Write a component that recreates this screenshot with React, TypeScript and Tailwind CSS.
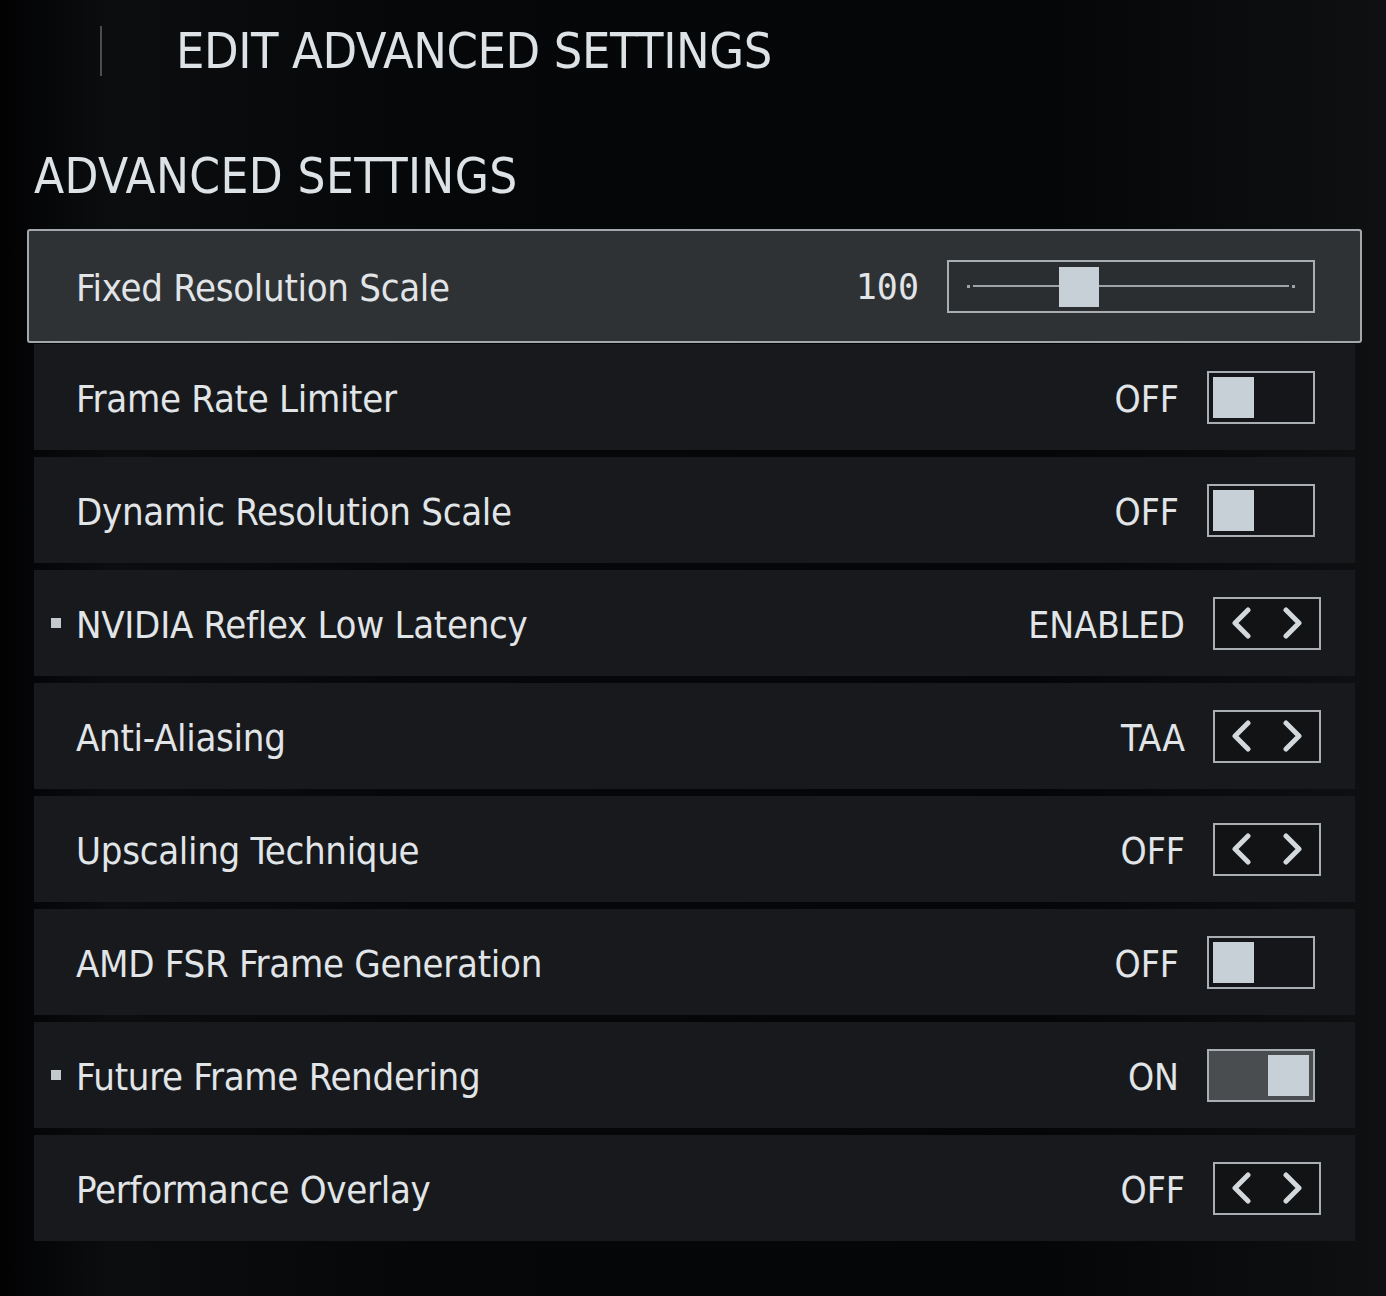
import React from 'react';

type Control =
  | { kind: 'slider'; value: string; pos: number }
  | { kind: 'toggle'; value: string; on: boolean }
  | { kind: 'arrows'; value: string };

type Setting = {
  label: string;
  bullet?: boolean;
  control: Control;
};

const settings: Setting[] = [
  { label: 'Fixed Resolution Scale', control: { kind: 'slider', value: '100', pos: 92 } },
  { label: 'Frame Rate Limiter', control: { kind: 'toggle', value: 'OFF', on: false } },
  { label: 'Dynamic Resolution Scale', control: { kind: 'toggle', value: 'OFF', on: false } },
  { label: 'NVIDIA Reflex Low Latency', bullet: true, control: { kind: 'arrows', value: 'ENABLED' } },
  { label: 'Anti-Aliasing', control: { kind: 'arrows', value: 'TAA' } },
  { label: 'Upscaling Technique', control: { kind: 'arrows', value: 'OFF' } },
  { label: 'AMD FSR Frame Generation', control: { kind: 'toggle', value: 'OFF', on: false } },
  { label: 'Future Frame Rendering', bullet: true, control: { kind: 'toggle', value: 'ON', on: true } },
  { label: 'Performance Overlay', control: { kind: 'arrows', value: 'OFF' } },
];

const Toggle = ({ on }: { on: boolean }) => (
  <div
    className={`flex w-[108px] h-[53px] p-[4px] border-2 border-[#a9aeb2] ${
      on ? 'bg-[#4a4d50] justify-end' : 'bg-[#141619] justify-start'
    }`}
  >
    <div className="w-[41px] h-full bg-[#c6d0d6]" />
  </div>
);

const Arrows = () => (
  <div className="flex items-center justify-center gap-[30px] w-[108px] h-[53px] border-2 border-[#a9aeb2] bg-[#111315]">
    <svg width="22" height="32" viewBox="0 0 22 32" fill="none">
      <polyline points="18,3 5,16 18,29" stroke="#d2d8dc" strokeWidth="5" strokeLinecap="round" strokeLinejoin="round" />
    </svg>
    <svg width="22" height="32" viewBox="0 0 22 32" fill="none">
      <polyline points="4,3 17,16 4,29" stroke="#d2d8dc" strokeWidth="5" strokeLinecap="round" strokeLinejoin="round" />
    </svg>
  </div>
);

const Slider = ({ pos }: { pos: number }) => (
  <div className="flex items-center w-[368px] h-[53px] px-[18px] border-2 border-[#a9aeb2] bg-[#2b2e31]">
    <div className="relative flex items-center w-full h-full">
      <div className="w-[3px] h-[3px] bg-[#9ea3a7]" />
      <div className="flex-1 h-[2px] mx-[3px] bg-[#9ea3a7]" />
      <div className="w-[3px] h-[3px] bg-[#9ea3a7]" />
      <div className="absolute top-[5px] w-[40px] h-[40px] bg-[#c6d0d6]" style={{ left: pos }} />
    </div>
  </div>
);

const Row = ({ setting, first }: { setting: Setting; first?: boolean }) => {
  const c = setting.control;
  return (
    <div
      className={
        first
          ? 'flex items-center h-[114px] -mx-[7px] pl-[22px] pr-[45px] bg-[#2f3235] border-2 border-[#a4a8ac] rounded-[3px]'
          : 'flex items-center h-[106px] pl-[17px] pr-[34px] bg-[#17191c]'
      }
    >
      <div className="w-[25px] flex items-center">
        {setting.bullet && <div className="w-[10px] h-[10px] bg-[#c3c9cd]" />}
      </div>
      <span className="flex-1 pt-[5px] text-[38px] text-[#e1e5e8] tracking-[-0.3px]">{setting.label}</span>
      {c.kind === 'slider' && (
        <div className="flex items-center gap-[28px]">
          <span className="pt-[3px] font-['DejaVu_Sans_Mono'] text-[35px] text-[#e1e5e8]">{c.value}</span>
          <Slider pos={c.pos} />
        </div>
      )}
      {c.kind === 'toggle' && (
        <div className="flex items-center gap-[28px] pr-[6px]">
          <span className="pt-[5px] text-[37px] text-[#e1e5e8]">{c.value}</span>
          <Toggle on={c.on} />
        </div>
      )}
      {c.kind === 'arrows' && (
        <div className="flex items-center gap-[28px]">
          <span className="pt-[5px] text-[37px] text-[#e1e5e8]">{c.value}</span>
          <Arrows />
        </div>
      )}
    </div>
  );
};

export default function App() {
  return (
    <div className="min-h-screen w-full bg-[linear-gradient(90deg,#020203_0%,#0b0d0f_8%,#060708_30%,#050607_75%,#0f1011_100%)] font-['DejaVu_Sans_Condensed','DejaVu_Sans',sans-serif] pb-[50px]">
      <header className="flex items-center h-[102px]">
        <div className="ml-[100px] w-[2px] h-[50px] bg-[#4a4e52]" />
        <h1 className="ml-[74px] text-[50px] leading-none text-[#dde2e6] tracking-[-0.4px]">EDIT ADVANCED SETTINGS</h1>
      </header>
      <h2 className="ml-[34px] mt-[50px] text-[49px] leading-none text-[#dde2e6] tracking-[0.4px]">ADVANCED SETTINGS</h2>
      <div className="ml-[34px] w-[1321px] mt-[28px] flex flex-col">
        <Row setting={settings[0]} first />
        <div className="flex flex-col gap-[7px] mt-px">
          {settings.slice(1).map((s) => (
            <Row key={s.label} setting={s} />
          ))}
        </div>
      </div>
    </div>
  );
}
